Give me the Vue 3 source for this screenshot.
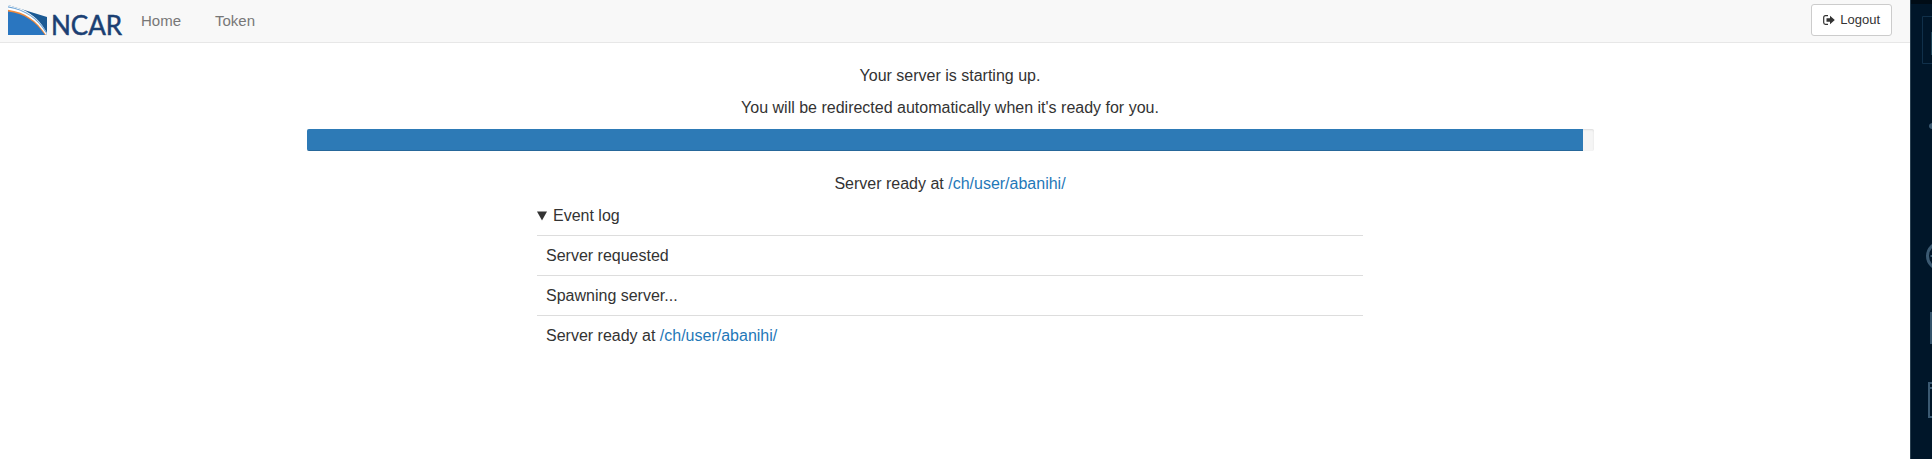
<script setup>
import { ref } from 'vue'

const serverUrl = '/ch/user/abanihi/'
const progress = ref(99.2)
const events = [
  { text: 'Server requested' },
  { text: 'Spawning server...' },
  { text: 'Server ready at ', url: serverUrl },
]
</script>

<template>
  <div class="screen">
    <div class="page">
      <header class="navbar">
        <a class="brand" href="#" aria-label="NCAR">
          <svg class="logo" viewBox="0 0 118 38" width="118" height="38" aria-hidden="true">
            <path d="M0 3L39 15V33H0Z" fill="#1b5a94" />
            <path d="M0 3L14 7.300C25 12 33 20 39 31V33H0Z" fill="#fff" />
            <path d="M0 4.200C18 7.500 30 16 38.500 30V33H0Z" fill="#6da4d6" />
            <path d="M0 5.600C17 8 29 17 38 31V33H0Z" fill="#fff" />
            <path d="M0 7.700C17 10 28 18 38 33H0Z" fill="#f08a3c" />
            <path d="M0 9.600C16 11.500 27 19 37 33H0Z" fill="#2a76c0" />
            <text x="43" y="33" class="wordmark">NCAR</text>
          </svg>
        </a>
        <nav class="links">
          <a href="#">Home</a>
          <a href="#">Token</a>
        </nav>
        <button class="logout" type="button">
          <svg viewBox="0 0 12 10" width="12" height="10" aria-hidden="true">
            <path d="M5 .7H2.500Q.7.700.7 2.500V7.500Q.7 9.300 2.500 9.300H5" fill="none" stroke="#333" stroke-width="1.200" />
            <path d="M3.500 3.300H7V.700L11.800 5L7 9.300V6.700H3.500Z" fill="#333" />
          </svg>
          <span>Logout</span>
        </button>
      </header>

      <main class="content">
        <div class="container">
          <p>Your server is starting up.</p>
          <p>You will be redirected automatically when it's ready for you.</p>
          <div class="progress" role="progressbar" aria-label="Server startup" aria-valuemin="0" aria-valuemax="100" :aria-valuenow="progress">
            <div class="bar" :style="{ width: progress + '%' }"></div>
          </div>
          <p>Server ready at <a :href="serverUrl">{{ serverUrl }}</a></p>
          <details class="log" open>
            <summary>
              <svg viewBox="0 0 10 10" width="10" height="10" aria-hidden="true"><path d="M0 .5H10L5 9.500Z" fill="#333" /></svg>
              <span>Event log</span>
            </summary>
            <div v-for="event in events" :key="event.text" class="event">
              {{ event.text }}<a v-if="event.url" :href="event.url">{{ event.url }}</a>
            </div>
          </details>
        </div>
      </main>
    </div>

    <aside class="desktop" aria-hidden="true">
      <svg viewBox="0 0 21 459" width="21" height="459" fill="none">
        <path d="M0 0H21V4H0Z" fill="#000c16" />
        <path d="M22 16.500H11.500V63.500H22" stroke="#10304a" />
        <path d="M20 32H21V55H20Z" fill="#1b4257" />
        <path d="M21 123Q18 123.500 18 126T21 129Z" fill="#3b5a72" />
        <circle cx="30" cy="256" r="13.500" stroke="#3b5a72" stroke-width="3" />
        <path d="M19.500 255H21V257H19.500Z" fill="#3b5a72" />
        <path d="M19 312H21V344H19Z" fill="#34536b" />
        <path d="M22 383H18V417H22M18 388H22" stroke="#3b5a72" stroke-width="2" />
      </svg>
    </aside>
  </div>
</template>

<style>
body {
  margin: 0;
  background: #fff;
}
</style>

<style scoped>
.screen {
  display: flex;
  min-height: 100vh;
  font: 16px/22px "Liberation Sans", Arial, sans-serif;
  color: #333;
}

.page {
  flex: 1;
  min-width: 0;
}

.navbar {
  display: flex;
  align-items: center;
  height: 42px;
  padding: 0 18px 0 8px;
  background: #f8f8f8;
  border-bottom: 1px solid #e7e7e7;
}

.logo {
  display: block;
  overflow: visible;
}

.wordmark {
  font: 26px Lato, sans-serif;
  fill: #1b3f73;
  stroke: #1b3f73;
  stroke-width: 0.5px;
}

.links {
  display: flex;
  gap: 34px;
  margin-left: 15px;
  font-size: 15px;
}

.links a {
  color: #777;
}

a {
  color: #1f78b8;
  text-decoration: none;
}

.logout {
  display: flex;
  align-items: center;
  gap: 5px;
  height: 32px;
  margin: -3px 0 0 auto;
  padding: 0 11px;
  border: 1px solid #ccc;
  border-radius: 3px;
  background: #fff;
  color: #333;
  font: 13px/20px "Liberation Sans", Arial, sans-serif;
}

.content {
  padding: 22px 26px 0 16px;
}

.container {
  max-width: 1287px;
  margin: 0 auto;
  text-align: center;
}

p {
  margin: 0 0 10px;
}

.progress {
  height: 22px;
  margin-bottom: 22px;
  overflow: hidden;
  border-radius: 2px;
  background: #f5f5f5;
  box-shadow: inset 0 1px 2px rgba(0, 0, 0, 0.1);
}

.bar {
  height: 100%;
  background: #2d7ab6;
  box-shadow: inset 0 -1px 0 rgba(0, 0, 0, 0.15);
}

.log {
  max-width: 826px;
  margin: 0 auto;
  text-align: left;
}

summary {
  display: flex;
  align-items: center;
  gap: 6px;
  margin-bottom: 8px;
}

.event {
  padding: 9px 9px 8px;
  border-top: 1px solid #ddd;
}

.desktop {
  flex: none;
  overflow: hidden;
  border-left: 1px solid #2a4050;
  background: #001629;
}

.desktop svg {
  display: block;
}
</style>
